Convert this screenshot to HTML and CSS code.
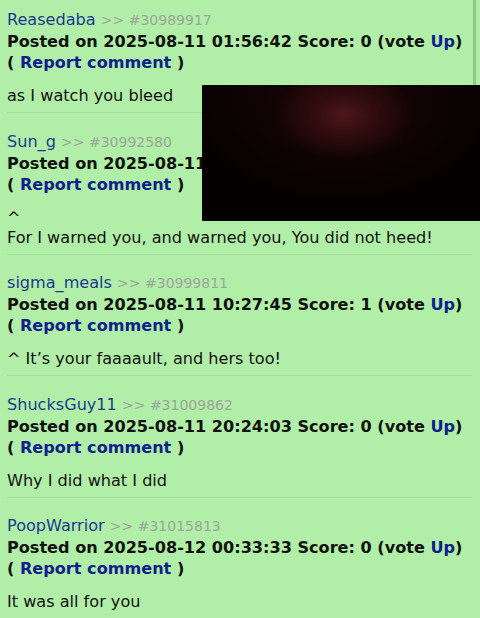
FILE: index.html
```html
<!DOCTYPE html>
<html lang="en">
<head>
  <meta charset="UTF-8">
  <title>Comments</title>
  <link rel="stylesheet" href="styles.css">
</head>
<body>
  <div class="comments">
    <div class="comment">
      <div class="meta"><a class="user" href="#">Reasedaba</a> <span class="ref">&gt;&gt; #30989917</span></div>
      <div class="posted">Posted on 2025-08-11 01:56:42 Score: 0 (vote <a href="#">Up</a>)</div>
      <div class="report">( <a href="#">Report comment</a> )</div>
      <p class="text">as I watch you bleed</p>
    </div>

    <div class="comment">
      <div class="meta"><a class="user" href="#">Sun_g</a> <span class="ref">&gt;&gt; #30992580</span></div>
      <div class="posted">Posted on 2025-08-11 03:14:20 Score: 0 (vote <a href="#">Up</a>)</div>
      <div class="report">( <a href="#">Report comment</a> )</div>
      <p class="text">^<br>For I warned you, and warned you, You did not heed!</p>
    </div>

    <div class="comment">
      <div class="meta"><a class="user" href="#">sigma_meals</a> <span class="ref">&gt;&gt; #30999811</span></div>
      <div class="posted">Posted on 2025-08-11 10:27:45 Score: 1 (vote <a href="#">Up</a>)</div>
      <div class="report">( <a href="#">Report comment</a> )</div>
      <p class="text">^ It’s your faaaault, and hers too!</p>
    </div>

    <div class="comment">
      <div class="meta"><a class="user" href="#">ShucksGuy11</a> <span class="ref">&gt;&gt; #31009862</span></div>
      <div class="posted">Posted on 2025-08-11 20:24:03 Score: 0 (vote <a href="#">Up</a>)</div>
      <div class="report">( <a href="#">Report comment</a> )</div>
      <p class="text">Why I did what I did</p>
    </div>

    <div class="comment">
      <div class="meta"><a class="user" href="#">PoopWarrior</a> <span class="ref">&gt;&gt; #31015813</span></div>
      <div class="posted">Posted on 2025-08-12 00:33:33 Score: 0 (vote <a href="#">Up</a>)</div>
      <div class="report">( <a href="#">Report comment</a> )</div>
      <p class="text">It was all for you</p>
    </div>
  </div>

  <div class="scroll-thumb"></div>
  <div class="video"></div>
</body>
</html>
```

FILE: styles.css
```css
body {
  margin: 0;
  height: 618px;
  overflow: hidden;
  position: relative;
  background: #b1eea7;
  color: #111;
  font-family: "DejaVu Sans", Verdana, sans-serif;
  font-size: 16.1px;
}

a {
  text-decoration: none;
}

.comment {
  margin: 0 8px 0 7px;
  padding: 17.5px 0 6px;
  border-bottom: 1px solid #a3dd99;
  line-height: 21px;
}

.comment:first-child {
  padding-top: 9px;
}

.meta .user {
  color: #1c3a90;
}

.meta .ref {
  color: #9aa79a;
  font-size: 14px;
}

.posted,
.report {
  font-weight: bold;
}

.posted a,
.report a {
  color: #0f1f8c;
}

.text {
  margin: 13px 0 0;
  line-height: 20px;
}

.scroll-thumb {
  position: absolute;
  top: 0;
  left: 473px;
  width: 3px;
  height: 90px;
  background: #8fc988;
}

.video {
  position: absolute;
  top: 85px;
  left: 202px;
  width: 278px;
  height: 136px;
  background:
    radial-gradient(ellipse 70px 45px at 142px 30px, #4e171a 0%, #300c0e 45%, rgba(20, 3, 5, 0) 100%),
    radial-gradient(ellipse 160px 110px at 140px 10px, #1c0506 0%, #050101 100%);
}
```
